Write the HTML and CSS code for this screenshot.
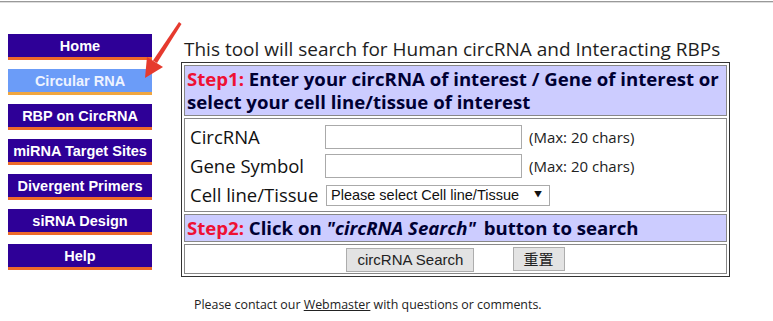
FILE: index.html
```html
<!DOCTYPE html>
<html lang="en">
<head>
    <meta charset="UTF-8">
    <title>circRNA Interactome - Human circRNA and RBPs</title>
    <link rel="stylesheet" href="styles.css">
</head>
<body>
    <div class="topline"></div>
    <div class="page">
        <nav class="side">
            <a class="navbtn" href="#">Home</a>
            <a class="navbtn active" href="#">Circular RNA</a>
            <a class="navbtn" href="#">RBP on CircRNA</a>
            <a class="navbtn" href="#">miRNA Target Sites</a>
            <a class="navbtn" href="#">Divergent Primers</a>
            <a class="navbtn" href="#">siRNA Design</a>
            <a class="navbtn" href="#">Help</a>
        </nav>
        <main class="content">
            <p class="intro">This tool will search for Human circRNA and Interacting RBPs</p>
            <form>
                <table class="tool">
                    <tr>
                        <td class="step"><span class="step-no">Step1:</span> Enter your circRNA of interest / Gene of interest or select your cell line/tissue of interest</td>
                    </tr>
                    <tr>
                        <td class="fields">
                            <div class="field">
                                <label for="circ">CircRNA</label>
                                <input type="text" id="circ" maxlength="20">
                                <span class="hint">(Max: 20 chars)</span>
                            </div>
                            <div class="field">
                                <label for="gene">Gene Symbol</label>
                                <input type="text" id="gene" maxlength="20">
                                <span class="hint">(Max: 20 chars)</span>
                            </div>
                            <div class="field">
                                <label for="cell">Cell line/Tissue</label>
                                <span class="select-wrap">
                                    <select id="cell">
                                        <option>Please select Cell line/Tissue</option>
                                    </select>
                                </span>
                            </div>
                        </td>
                    </tr>
                    <tr>
                        <td class="step"><span class="step-no">Step2:</span> Click on <i>"circRNA Search"</i> button to search</td>
                    </tr>
                    <tr>
                        <td class="actions">
                            <button type="submit" class="btn">circRNA Search</button>
                            <button type="reset" class="btn">重置</button>
                        </td>
                    </tr>
                </table>
            </form>
            <p class="contact">Please contact our <a href="#">Webmaster</a> with questions or comments.</p>
        </main>
    </div>
    <svg class="arrow" width="60" height="70" viewBox="0 0 60 70">
        <polygon points="49,7 51.5,9 27,48 23,45.5" fill="#e63a2e"/>
        <polygon points="15,63 17,42 33,52" fill="#e63a2e"/>
    </svg>
</body>
</html>
```

FILE: styles.css
```css
body {
    margin: 0;
    padding: 0;
    background: #ffffff;
    font-family: 'Open Sans', 'Noto Sans CJK SC', sans-serif;
    color: #222;
}

.topline {
    height: 1px;
    margin-top: 1px;
    border-top: 1px solid #999;
    background: #ddd;
}

.page {
    display: flex;
    align-items: flex-start;
}

/* left menu */
.side {
    width: 144px;
    margin-left: 8px;
    padding-top: 31px;
    display: flex;
    flex-direction: column;
    gap: 9px;
}

.navbtn {
    display: block;
    height: 23px;
    line-height: 24px;
    background: #2e0097;
    border-bottom: 3px solid #ee6a2a;
    color: #ffffff;
    font-family: 'Liberation Sans', Arial, sans-serif;
    font-weight: bold;
    font-size: 14.5px;
    text-align: center;
    text-decoration: none;
    white-space: nowrap;
    overflow: hidden;
}

.navbtn.active {
    background: #6b9cf8;
    color: #eef3ff;
    border-bottom-color: #f0a640;
}

/* main column */
.content {
    margin-left: 29px;
    width: 549px;
}

.intro {
    margin: 33px 0 0 3px;
    font-size: 19px;
    line-height: 26px;
    color: #1e1e1e;
    white-space: nowrap;
}

.tool {
    width: 549px;
    table-layout: fixed;
    margin-top: 0;
    border: 1px solid #333;
    border-spacing: 2px;
}

.tool td {
    border: 1px solid #888;
    padding: 0;
}

.step {
    background: #ccccff;
    color: #000033;
    font-weight: bold;
    font-size: 18.6px;
    line-height: 23px;
    padding: 1px 2px 2px 2px !important;
}

.step-no {
    color: #ee1133;
}

.step i {
    padding-right: 3px;
}

.fields {
    padding: 3px 5px 2px !important;
}

.field {
    display: flex;
    align-items: center;
    height: 29px;
}

.field label {
    width: 135px;
    font-size: 18.5px;
    color: #111;
    white-space: nowrap;
}

.field input {
    box-sizing: border-box;
    width: 197px;
    height: 24px;
    border: 1px solid #aaa;
    margin: 0;
}

.hint {
    margin-left: 7px;
    font-size: 15px;
    color: #222;
}

.select-wrap {
    position: relative;
    margin-left: 1px;
}

.select-wrap::after {
    content: "\25BC";
    position: absolute;
    right: 8px;
    top: 5px;
    font-size: 8px;
    color: #111;
    pointer-events: none;
}

.field select {
    box-sizing: border-box;
    width: 224px;
    height: 21px;
    padding: 0 0 0 4px;
    font-family: 'Liberation Sans', Arial, sans-serif;
    font-size: 14.5px;
    color: #111;
    border: 1px solid #aaa;
    background: #fff;
    appearance: none;
    -webkit-appearance: none;
    border-radius: 0;
}

.actions {
    height: 28px;
    text-align: center;
}

.btn {
    height: 24px;
    padding: 0 10px;
    margin: 0 17px;
    background: #e3e3e3;
    border: 1px solid #adadad;
    font-family: 'Liberation Sans', 'Noto Sans CJK SC', Arial, sans-serif;
    font-size: 15px;
    color: #222;
}

.contact {
    margin: 19px 0 0 13px;
    font-size: 12.4px;
    color: #222;
}

.contact a {
    color: #222;
}

.arrow {
    position: absolute;
    left: 130px;
    top: 15px;
}
```
